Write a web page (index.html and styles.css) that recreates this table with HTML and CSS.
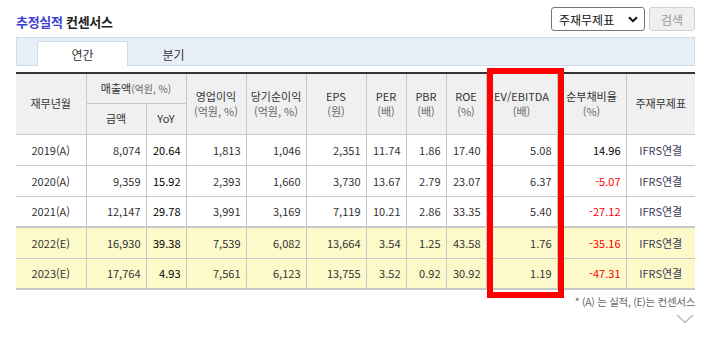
FILE: index.html
```html
<!DOCTYPE html>
<html lang="ko">
<head>
<meta charset="utf-8">
<title>추정실적 컨센서스</title>
<link rel="stylesheet" href="styles.css">
</head>
<body>
<div class="wrap">
  <div class="top">
    <h2 class="title"><span class="hl">추정실적</span> 컨센서스</h2>
    <div class="form">
      <div class="select">
        <span>주재무제표</span>
        <svg width="10" height="7" viewBox="0 0 10 7"><path d="M1 1.2 L5 5.2 L9 1.2" fill="none" stroke="#111" stroke-width="2"/></svg>
      </div>
      <div class="btn">검색</div>
    </div>
  </div>
  <div class="tabs">
    <div class="tab active">연간</div>
    <div class="tab">분기</div>
  </div>
  <div class="tablewrap">
    <table class="grid">
      <colgroup>
        <col style="width:70px"><col style="width:60px"><col style="width:40px"><col style="width:60px"><col style="width:60px"><col style="width:60px"><col style="width:40px"><col style="width:40px"><col style="width:40px"><col style="width:71px"><col style="width:69px"><col style="width:69px">
      </colgroup>
      <thead>
        <tr class="h1">
          <th rowspan="2" class="first">재무년월</th>
          <th colspan="2">매출액<span class="sm">(억원, %)</span></th>
          <th rowspan="2">영업이익<br><span class="sub">(억원, %)</span></th>
          <th rowspan="2">당기순이익<br><span class="sub">(억원, %)</span></th>
          <th rowspan="2">EPS<br><span class="sub">(원)</span></th>
          <th rowspan="2">PER<br><span class="sub">(배)</span></th>
          <th rowspan="2">PBR<br><span class="sub">(배)</span></th>
          <th rowspan="2">ROE<br><span class="sub">(%)</span></th>
          <th rowspan="2">EV/EBITDA<br><span class="sub">(배)</span></th>
          <th rowspan="2">순부채비율<br><span class="sub">(%)</span></th>
          <th rowspan="2" class="last">주재무제표</th>
        </tr>
        <tr class="h2">
          <th>금액</th>
          <th>YoY</th>
        </tr>
      </thead>
      <tbody>
        <tr>
          <td class="c first">2019(A)</td><td>8,074</td><td class="b">20.64</td><td>1,813</td><td>1,046</td><td>2,351</td><td>11.74</td><td>1.86</td><td>17.40</td><td>5.08</td><td class="b">14.96</td><td class="c last">IFRS연결</td>
        </tr>
        <tr>
          <td class="c first">2020(A)</td><td>9,359</td><td class="b">15.92</td><td>2,393</td><td>1,660</td><td>3,730</td><td>13.67</td><td>2.79</td><td>23.07</td><td>6.37</td><td class="neg">-5.07</td><td class="c last">IFRS연결</td>
        </tr>
        <tr>
          <td class="c first">2021(A)</td><td>12,147</td><td class="b">29.78</td><td>3,991</td><td>3,169</td><td>7,119</td><td>10.21</td><td>2.86</td><td>33.35</td><td>5.40</td><td class="neg">-27.12</td><td class="c last">IFRS연결</td>
        </tr>
        <tr class="est sep">
          <td class="c first">2022(E)</td><td>16,930</td><td class="b">39.38</td><td>7,539</td><td>6,082</td><td>13,664</td><td>3.54</td><td>1.25</td><td>43.58</td><td>1.76</td><td class="neg">-35.16</td><td class="c last">IFRS연결</td>
        </tr>
        <tr class="est">
          <td class="c first">2023(E)</td><td>17,764</td><td class="b">4.93</td><td>7,561</td><td>6,123</td><td>13,755</td><td>3.52</td><td>0.92</td><td>30.92</td><td>1.19</td><td class="neg">-47.31</td><td class="c last">IFRS연결</td>
        </tr>
      </tbody>
    </table>
    <div class="redbox"></div>
  </div>
  <p class="note">* (A) 는 실적, (E)는 컨센서스</p>
  <div class="more">
    <svg width="18" height="10" viewBox="0 0 18 10"><path d="M1 1 L9 8.5 L17 1" fill="none" stroke="#bcbcbc" stroke-width="1.4"/></svg>
  </div>
</div>
</body>
</html>
```

FILE: styles.css
```css
* { box-sizing: border-box; }
html, body { margin: 0; padding: 0; background: #fff; }
body {
  font-family: "Noto Sans CJK KR", "Noto Sans", sans-serif;
  font-size: 11px;
  color: #333;
}
.wrap {
  width: 695px;
  padding-left: 16px;
}
.top {
  display: flex;
  justify-content: space-between;
  align-items: flex-start;
  height: 37px;
  padding-top: 7px;
}
.title {
  margin: 7px 0 0;
  font-size: 13px;
  font-weight: bold;
  color: #222;
  letter-spacing: -0.3px;
  line-height: 16px;
}
.title .hl { color: #3c3fd1; }
.form {
  display: flex;
  gap: 4px;
}
.select {
  width: 94px;
  height: 24px;
  border: 1px solid #767676;
  border-radius: 3px;
  display: flex;
  align-items: center;
  justify-content: space-between;
  padding: 0 6px 0 7px;
  font-size: 12px;
  color: #111;
  background: #fff;
}
.btn {
  width: 46px;
  height: 24px;
  border: 1px solid #cfcfcf;
  border-radius: 3px;
  background: #efefef;
  color: #9a9a9a;
  font-size: 12px;
  display: flex;
  align-items: center;
  justify-content: center;
}
.tabs {
  height: 29px;
  background: #e9eff9;
  border: 1px solid #cfdaea;
  display: flex;
  align-items: flex-end;
  padding-left: 20px;
}
.tab {
  width: 91px;
  height: 24px;
  display: flex;
  align-items: center;
  justify-content: center;
  font-size: 12px;
  color: #333;
  margin-bottom: -1px;
}
.tab.active {
  background: #fff;
  border: 1px solid #cfdaea;
  border-bottom: none;
  height: 25px;
}
.tablewrap {
  position: relative;
  margin-top: 6px;
}
.grid {
  width: 679px;
  border-collapse: collapse;
  table-layout: fixed;
  border-top: 2px solid #333;
  border-bottom: 2px solid #c8c8c8;
}
.grid th, .grid td {
  border: 1px solid #c8c8c8;
  padding: 0;
}
.grid .first { border-left: none; }
.grid .last { border-right: none; }
.grid th {
  background: #f0f0f0;
  font-weight: normal;
  font-size: 11px;
  color: #333;
  line-height: 15px;
  text-align: center;
}
.grid .h1 th { height: 30px; }
.grid .h2 th { height: 31px; }
.grid .sub { color: #666; }
.grid .sm { color: #666; font-size: 10px; }
.grid td {
  height: 31px;
  text-align: right;
  padding-right: 5px;
  color: #333;
}
.grid td.c { text-align: center; padding-right: 0; }
.grid td.b { color: #000; }
.grid td.neg { color: #f00; }
.grid td.last { color: #3a3a55; }
.grid tr.est td { background: #fcf9ca; }
.grid tr.sep td { border-top: 2px solid #c8c8c8; }
.redbox {
  position: absolute;
  left: 471px;
  top: -4px;
  width: 77px;
  height: 230px;
  border: 6px solid #ff0000;
}
.note {
  margin: 5px 0 0;
  text-align: right;
  font-size: 10.5px;
  color: #666;
  letter-spacing: -0.3px;
  line-height: 14px;
}
.more {
  display: flex;
  justify-content: flex-end;
  padding-right: 1px;
  margin-top: 5px;
}
.more svg { display: block; }
```
